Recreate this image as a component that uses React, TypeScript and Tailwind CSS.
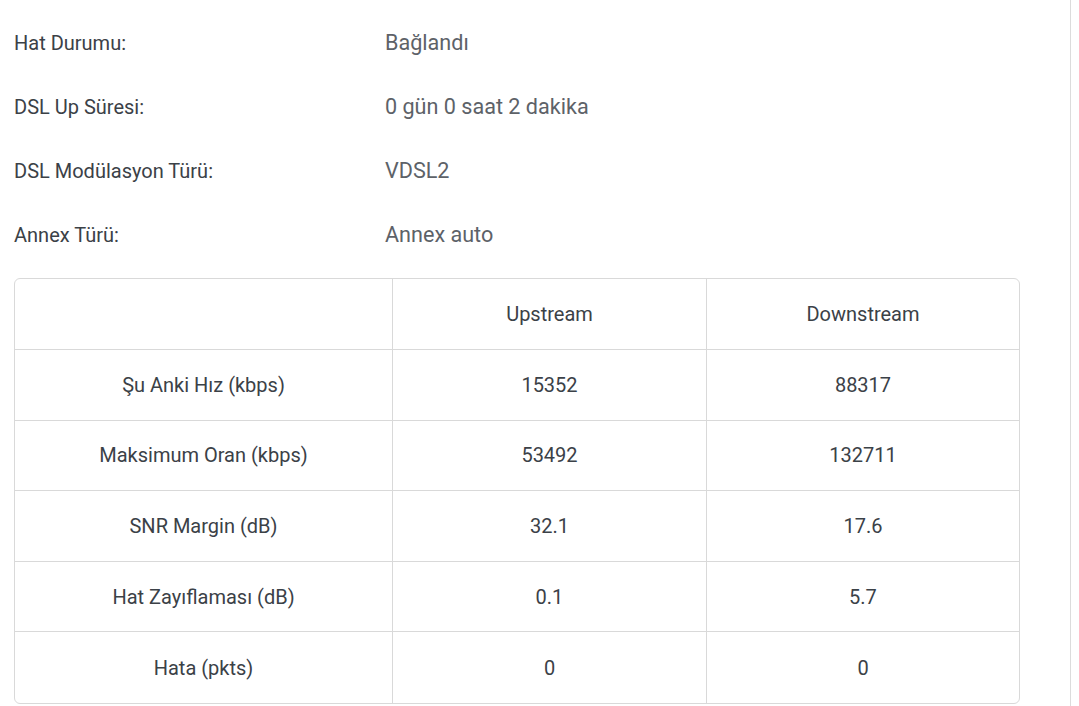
const info = [
  { label: 'Hat Durumu:', value: 'Bağlandı' },
  { label: 'DSL Up Süresi:', value: '0 gün 0 saat 2 dakika' },
  { label: 'DSL Modülasyon Türü:', value: 'VDSL2' },
  { label: 'Annex Türü:', value: 'Annex auto' },
];

const rows = [
  { name: 'Şu Anki Hız (kbps)', up: '15352', down: '88317' },
  { name: 'Maksimum Oran (kbps)', up: '53492', down: '132711' },
  { name: 'SNR Margin (dB)', up: '32.1', down: '17.6' },
  { name: 'Hat Zayıflaması (dB)', up: '0.1', down: '5.7' },
  { name: 'Hata (pkts)', up: '0', down: '0' },
];

export default function App() {
  return (
    <div
      className="h-[706px] w-[1079px] bg-white overflow-hidden"
      style={{ fontFamily: 'Roboto, "Liberation Sans", sans-serif' }}
    >
      <div className="h-full w-[1071px] border-r border-[#dcdcdc] pl-[14px] pt-[11px]">
        <div className="w-[1006px]">
          {info.map((r) => (
            <div key={r.label} className="flex h-16 items-center">
              <div className="w-[371px] text-[20px] text-[#3b4147]">{r.label}</div>
              <div className="text-[21.6px] text-[#5d6268]">{r.value}</div>
            </div>
          ))}

          <div className="mt-[11px] overflow-hidden rounded-[6px] border border-[#d9d9d9] text-[20px] text-[#3b4147]">
            <div className="grid h-[71px] grid-cols-[378px_314px_1fr] border-b border-[#d9d9d9]">
              <div className="border-r border-[#d9d9d9]" />
              <div className="flex items-center justify-center border-r border-[#d9d9d9]">Upstream</div>
              <div className="flex items-center justify-center">Downstream</div>
            </div>
            {rows.map((r, i) => (
              <div
                key={r.name}
                className={`grid h-[70.6px] grid-cols-[378px_314px_1fr] ${
                  i < rows.length - 1 ? 'border-b border-[#d9d9d9]' : ''
                }`}
              >
                <div className="flex items-center justify-center border-r border-[#d9d9d9]">{r.name}</div>
                <div className="flex items-center justify-center border-r border-[#d9d9d9]">{r.up}</div>
                <div className="flex items-center justify-center">{r.down}</div>
              </div>
            ))}
          </div>
        </div>
      </div>
    </div>
  );
}
